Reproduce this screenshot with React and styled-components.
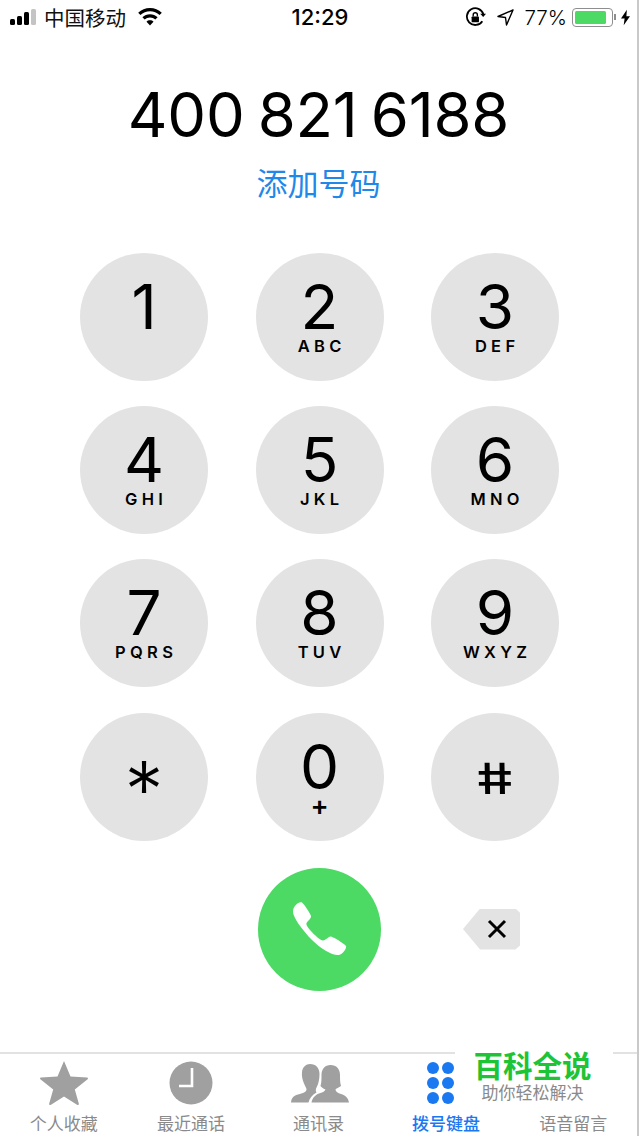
import React from "react";
import styled, { createGlobalStyle } from "styled-components";

const CJK = `Inter, "Noto Sans CJK SC", sans-serif`;

const GlobalStyle = createGlobalStyle`
  html, body {
    margin: 0;
    padding: 0;
    background: #fff;
    font-family: ${CJK};
  }
`;

const KEYS = [
  ["1", ""], ["2", "ABC"], ["3", "DEF"],
  ["4", "GHI"], ["5", "JKL"], ["6", "MNO"],
  ["7", "PQRS"], ["8", "TUV"], ["9", "WXYZ"],
  ["*", null], ["0", "+"], ["#", null],
];

function StarIcon() {
  return (
    <svg width="48" height="44" viewBox="0 0 48 44">
      <path
        fill="#a0a0a0"
        d="M24 0l6.500 15.500 16.500 1c1 .2 1.300 1 .6 1.700L34.800 28.500l4 14c.2 1.300-.6 1.800-1.800 1.300L24 35.500l-13 8.300c-1.200.5-2-.0-1.800-1.300l4-14L.4 18.200c-.7-.7-.4-1.500.6-1.700l16.500-1z"
      />
    </svg>
  );
}

function ClockIcon() {
  return (
    <svg width="44" height="44" viewBox="0 0 44 44">
      <circle cx="22" cy="22" r="21.500" fill="#a0a0a0" />
      <path d="M23 7v18H10" fill="none" stroke="#fff" strokeWidth="2.600" />
    </svg>
  );
}

function ContactsIcon() {
  return (
    <ContactsGlyph width="58" height="39" viewBox="0 0 58 39">
      <path
        fill="#a0a0a0"
        d="M19 0C25 0 28.500 4 28.500 10C28.500 15 27.500 19.500 26 22.500C24.500 25 24.500 27.500 25.500 28.500C21 31 18.500 34.500 17.500 38.500H0C.5 34 2 32 7 30.500C12 29 15.500 28 15.500 25.500C15.500 24 14 22 13 19.500C11.500 16 10.500 12 11 8C11.500 3 15 0 19 0z"
      />
      <path
        fill="#a0a0a0"
        d="M39.500 1C45.500 1 49 5 49 11C49 15 49 19 50 22C47 24 45 24.500 44.500 25.500C44.500 27.500 47 29 50 30C54.500 31.500 57 33.500 58 38.500H20.500C21.500 33.500 24.500 31 28 29.500C31 28.500 34 27.500 34.500 25.500C33 25 31 24 29.500 22C30.500 19 30.500 15 30.500 11C30.500 5 34 1 39.500 1z"
      />
    </ContactsGlyph>
  );
}

function KeypadIcon() {
  return (
    <KeypadGlyph width="27" height="42" viewBox="0 0 27 42">
      {[6, 21, 36].map((cy) =>
        [6, 21].map((cx) => (
          <circle key={`${cx}-${cy}`} cx={cx} cy={cy} r="6" fill="#1a78f0" />
        ))
      )}
    </KeypadGlyph>
  );
}

const TABS = [
  { label: "个人收藏", icon: <StarIcon /> },
  { label: "最近通话", icon: <ClockIcon /> },
  { label: "通讯录", icon: <ContactsIcon /> },
  { label: "拨号键盘", icon: <KeypadIcon />, active: true },
  { label: "语音留言", icon: null },
];

export default function App() {
  return (
    <Page>
      <GlobalStyle />
      <StatusBar>
        <StatusSide>
          <Signal>
            {[6, 9, 13, 16].map((h, i) => (
              <SignalBar key={h} $height={h} $dim={i === 3} />
            ))}
          </Signal>
          <Carrier>中国移动</Carrier>
          <svg width="24" height="18" viewBox="0 0 24 18">
            <path
              fill="#000"
              d="M12 0c4.500 0 8.700 1.700 11.800 4.700l-2.200 2.400C19 4.700 15.600 3.300 12 3.300S5 4.700 2.400 7.100L.2 4.700C3.300 1.700 7.500 0 12 0z"
            />
            <path
              fill="#000"
              d="M12 6.200c2.900 0 5.500 1.100 7.600 3l-2.300 2.400c-1.400-1.300-3.300-2.100-5.300-2.100s-3.900.8-5.300 2.100L4.400 9.200c2.100-1.900 4.700-3 7.600-3z"
            />
            <path fill="#000" d="M12 12.300c1.400 0 2.600.5 3.500 1.400L12 17.500l-3.500-3.800c.9-.9 2.100-1.400 3.500-1.400z" />
          </svg>
        </StatusSide>
        <Clock>12:29</Clock>
        <StatusSide $end>
          <svg width="21" height="21" viewBox="0 0 20 20">
            <path
              d="M16.500 13.500A8 8 0 1 1 17.500 7"
              fill="none"
              stroke="#000"
              strokeWidth="1.700"
            />
            <path d="M14.500 6.500h5.500l-2.700 3z" fill="#000" />
            <rect x="6.300" y="9" width="7" height="5.500" rx="0.800" fill="#000" />
            <path d="M7.800 9V7.500a2 2 0 0 1 4 0V9" fill="none" stroke="#000" strokeWidth="1.300" />
          </svg>
          <LocationGap>
            <svg width="17" height="17" viewBox="0 0 17 17">
              <path d="M16 1L1 7.500l7.500 1 1 7.500z" fill="none" stroke="#000" strokeWidth="1.400" strokeLinejoin="round" />
            </svg>
          </LocationGap>
          <Percent>77%</Percent>
          <Battery>
            <BatteryLevel style={{ width: `${77 * 1.15}%` }} />
          </Battery>
          <BatteryCap />
          <svg width="9" height="17" viewBox="0 0 10 17">
            <path d="M6.500 0L0 9.500h4L3 17l7-10H6z" fill="#000" />
          </svg>
        </StatusSide>
      </StatusBar>

      <PhoneNumber>400 821 6188</PhoneNumber>
      <AddNumber>添加号码</AddNumber>

      <Keypad>
        {KEYS.map(([digit, letters]) =>
          letters === null ? (
            <Key key={digit}>
              {digit === "*" ? <Asterisk>*</Asterisk> : <Hash>#</Hash>}
            </Key>
          ) : (
            <Key key={digit}>
              <Digit>{digit}</Digit>
              {letters === "+" ? <Plus>+</Plus> : <Letters>{letters}</Letters>}
            </Key>
          )
        )}
      </Keypad>

      <ActionRow>
        <CallButton>
          <svg width="54" height="54" viewBox="0 0 54 54">
            <path
              fill="#fff"
              d="M2 4C4 1.500 7-.5 9 .5C10.500 1.200 17 11 18 14C18.500 16 15 18.500 13.500 21C13 22.500 14 24.500 17 28C22 33.500 27 38 30 38.500C32 38.800 35 35 37.500 34.500C40 34.500 51 41.500 53 44C54 46 50 52 46 53C40 54 28 47 19 38C9 28 0 15 0 10C0 8 .5 5.500 2 4z"
            />
          </svg>
        </CallButton>
        <Backspace>
          <svg width="22" height="22" viewBox="0 0 22 22">
            <path d="M3 3l16 16M19 3L3 19" stroke="#000" strokeWidth="3" fill="none" />
          </svg>
        </Backspace>
      </ActionRow>

      <TabBar>
        {TABS.map((tab) => (
          <Tab key={tab.label}>
            <TabIcon>{tab.icon}</TabIcon>
            <TabLabel $active={tab.active}>{tab.label}</TabLabel>
          </Tab>
        ))}
      </TabBar>

      <Watermark>
        <WatermarkTitle>百科全说</WatermarkTitle>
        <WatermarkSub>助你轻松解决</WatermarkSub>
      </Watermark>
    </Page>
  );
}

const Page = styled.div`
  position: relative;
  box-sizing: border-box;
  width: 639px;
  height: 1136px;
  overflow: hidden;
  background: #fff;
  border-right: 2px solid #c9c9c9;
  display: flex;
  flex-direction: column;
`;

const StatusBar = styled.div`
  height: 34px;
  display: grid;
  grid-template-columns: 1fr auto 1fr;
  align-items: center;
  padding: 0 7px 0 10px;
`;

const StatusSide = styled.div`
  display: flex;
  align-items: center;
  justify-content: ${(p) => (p.$end ? "flex-end" : "flex-start")};
`;

const Signal = styled.div`
  display: flex;
  align-items: flex-end;
  gap: 2px;
  height: 16px;
  margin-right: 8px;
`;

const SignalBar = styled.span`
  width: 5px;
  height: ${(p) => p.$height}px;
  border-radius: 1.500px;
  background: ${(p) => (p.$dim ? "#c4c4c4" : "#000")};
`;

const Carrier = styled.span`
  font-size: 20.500px;
  color: #111;
  margin-right: 12px;
`;

const Clock = styled.span`
  font-size: 22px;
  font-weight: 500;
  color: #000;
`;

const LocationGap = styled.span`
  display: flex;
  margin: 0 10px 0 11px;
`;

const Percent = styled.span`
  font-size: 20.500px;
  font-weight: 300;
  color: #000;
  margin-right: 5px;
`;

const Battery = styled.div`
  box-sizing: border-box;
  width: 41px;
  height: 19px;
  border: 1px solid #8e8e8e;
  border-radius: 4px;
  padding: 2px;
`;

const BatteryLevel = styled.div`
  height: 100%;
  background: #4cd964;
  border-radius: 1.500px;
`;

const BatteryCap = styled.span`
  width: 2px;
  height: 6px;
  background: #8e8e8e;
  margin: 0 5px 0 1px;
`;

const PhoneNumber = styled.div`
  margin-top: 46px;
  height: 70px;
  line-height: 70px;
  text-align: center;
  font-size: 61.500px;
  font-weight: 380;
  letter-spacing: -0.200px;
  word-spacing: -4px;
  color: #000;
`;

const AddNumber = styled.div`
  margin-top: 16px;
  height: 36px;
  line-height: 36px;
  text-align: center;
  font-size: 31px;
  color: #1f88e8;
`;

const Keypad = styled.div`
  margin-top: 51px;
  padding-left: 80px;
  display: grid;
  grid-template-columns: repeat(3, 128px);
  grid-auto-rows: 128px;
  column-gap: 47.500px;
  row-gap: 25.200px;
`;

const Key = styled.div`
  width: 128px;
  height: 128px;
  border-radius: 50%;
  background: #e3e3e3;
  display: flex;
  flex-direction: column;
  align-items: center;
  color: #000;
`;

const Digit = styled.div`
  margin-top: 27px;
  height: 54px;
  line-height: 54px;
  font-size: 62px;
  font-weight: 380;
`;

const Letters = styled.div`
  height: 20px;
  line-height: 20px;
  margin-top: 2px;
  font-size: 16.500px;
  font-weight: 600;
  letter-spacing: 4.300px;
  padding-left: 4.300px;
`;

const Plus = styled.div`
  height: 20px;
  line-height: 20px;
  margin-top: 2px;
  font-size: 27px;
  font-weight: 600;
`;

const Asterisk = styled.div`
  margin-top: 37px;
  height: 80px;
  line-height: 80px;
  font-size: 78px;
  font-weight: 350;
`;

/* the dial pad's hash is upright and wide, so the slanted font glyph gets straightened */
const Hash = styled.div`
  margin-top: 40px;
  height: 50px;
  line-height: 50px;
  font-size: 43px;
  font-weight: 450;
  transform: scaleX(1.35) skewX(10deg);
`;

const ActionRow = styled.div`
  margin-top: 27px;
  padding-left: 258px;
  display: flex;
  align-items: center;
  gap: 82px;
`;

const CallButton = styled.div`
  width: 123px;
  height: 123px;
  border-radius: 50%;
  background: #4cd964;
  display: flex;
  align-items: center;
  justify-content: center;
`;

const Backspace = styled.div`
  width: 57px;
  height: 41px;
  background: #e3e3e3;
  clip-path: polygon(30% 0, 92% 0, 100% 10%, 100% 90%, 92% 100%, 30% 100%, 0 50%);
  display: flex;
  align-items: center;
  justify-content: center;
  padding-left: 11px;
  box-sizing: border-box;
`;

const TabBar = styled.div`
  margin-top: auto;
  height: 84px;
  border-top: 2px solid #e2e2e2;
  display: grid;
  grid-template-columns: repeat(5, 1fr);
  box-sizing: border-box;
`;

const Tab = styled.div`
  display: flex;
  flex-direction: column;
  align-items: center;
`;

const TabIcon = styled.div`
  height: 46px;
  padding: 6px 0 8px;
  display: flex;
  align-items: center;
  justify-content: center;
`;

const KeypadGlyph = styled.svg`
  margin-right: 11px;
`;

const ContactsGlyph = styled.svg`
  margin-left: 4px;
`;

const TabLabel = styled.div`
  font-size: 17px;
  line-height: 20px;
  color: ${(p) => (p.$active ? "#1a78f0" : "#8a8a8a")};
  font-weight: ${(p) => (p.$active ? 500 : 400)};
`;

/* badge over the tab bar's corner */
const Watermark = styled.div`
  position: absolute;
  left: 455px;
  top: 1040px;
  width: 158px;
  height: 72px;
  background: #fff;
  display: flex;
  flex-direction: column;
  align-items: center;
  padding: 9px 3px 0 0;
  box-sizing: border-box;
`;

const WatermarkTitle = styled.div`
  font-size: 29.500px;
  line-height: 35px;
  font-weight: 700;
  color: #1cc436;
`;

const WatermarkSub = styled.div`
  font-size: 17px;
  line-height: 19px;
  color: #8a8a8a;
`;
